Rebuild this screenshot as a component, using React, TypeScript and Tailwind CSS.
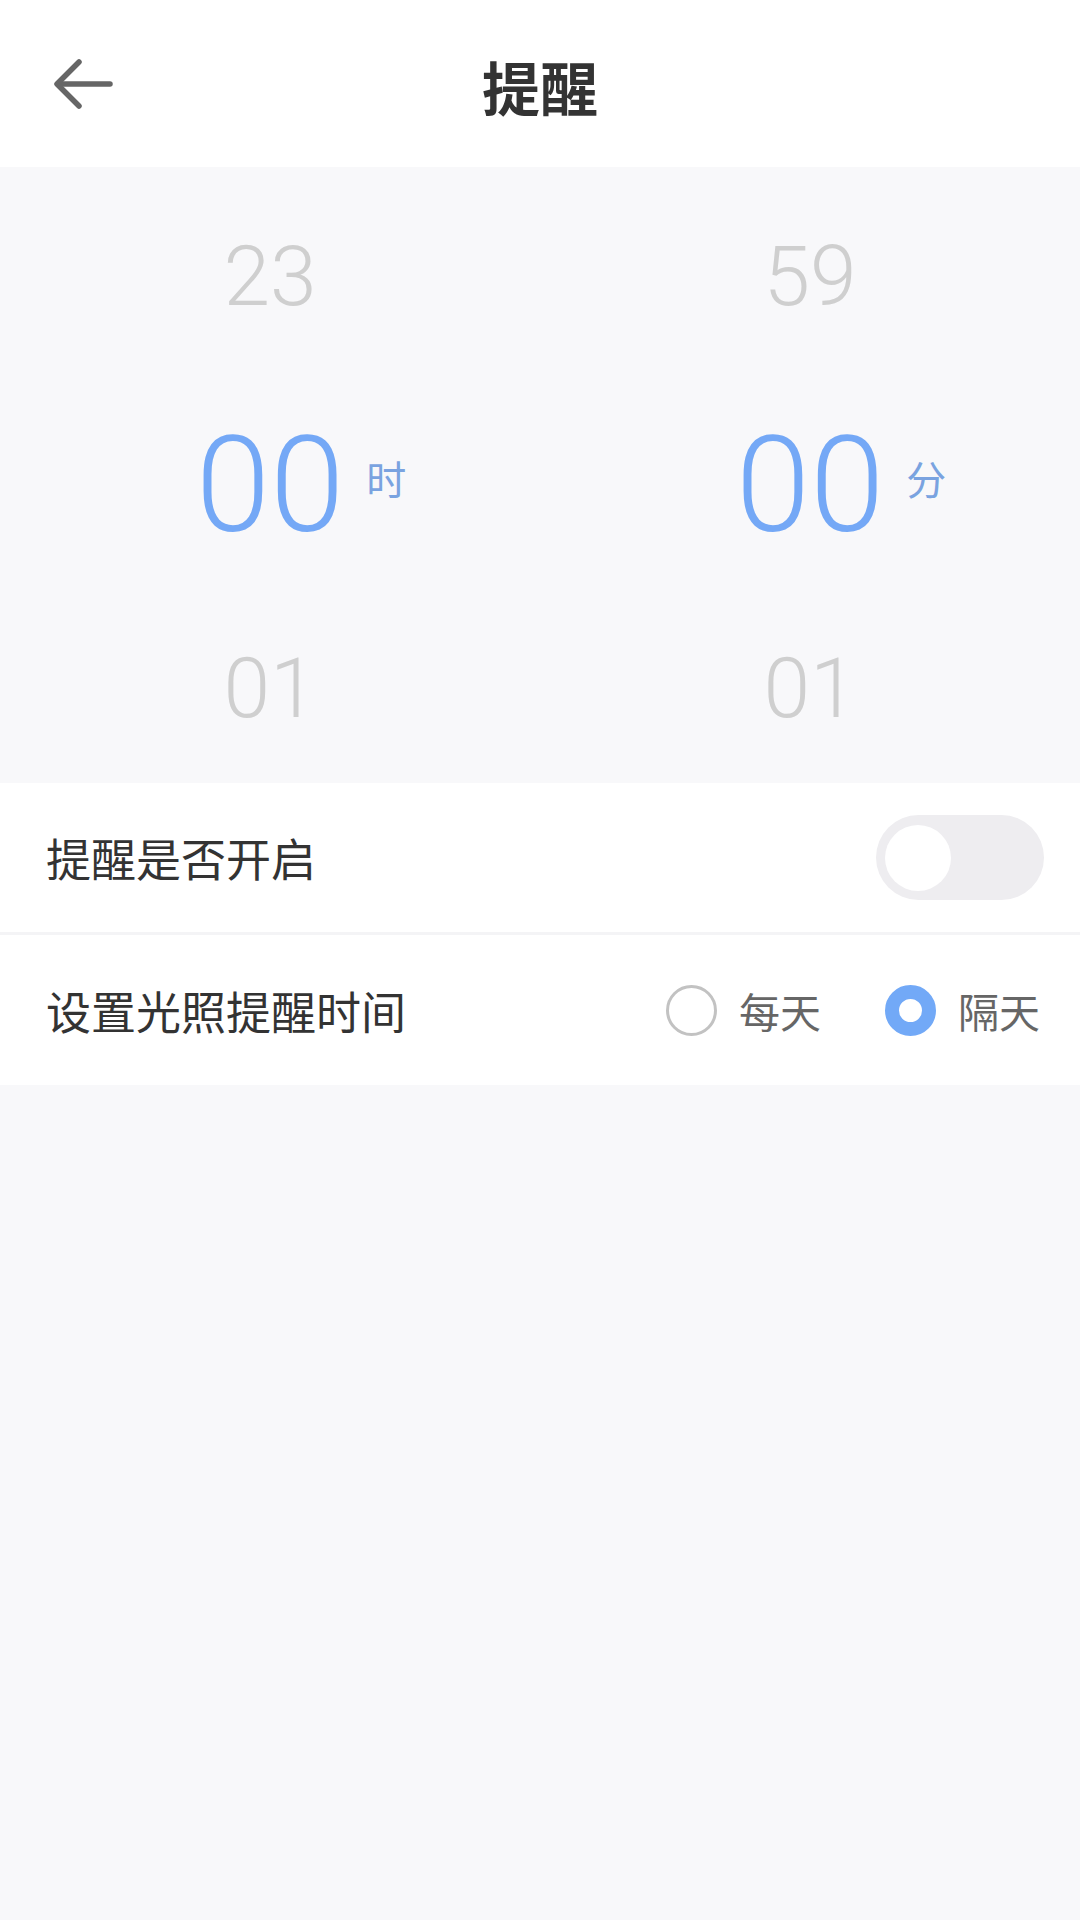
import React from "react";

const cjk = { fontFamily: '"Noto Sans CJK SC", "Noto Sans", sans-serif' };
const num = { fontFamily: 'Roboto, "Noto Sans", sans-serif' };

function Column({ top, mid, bottom, unit }: { top: string; mid: string; bottom: string; unit: string }) {
  return (
    <div className="flex flex-1 flex-col pt-[6px]">
      <div className="flex h-[212px] shrink-0 items-start justify-center pt-[46px]">
        <span style={num} className="text-[84px] font-light leading-[115px] text-[#cfcfcf]">{top}</span>
      </div>
      <div className="flex h-[201px] shrink-0 items-center justify-center">
        <span style={num} className="relative text-[134px] font-light leading-none text-[#74a8f6]">
          {mid}
          <span
            style={cjk}
            className="absolute left-full top-1/2 ml-[22px] -translate-y-[70%] whitespace-nowrap text-[40px] font-normal leading-none text-[#7aa3e0]"
          >
            {unit}
          </span>
        </span>
      </div>
      <div className="flex h-[201px] shrink-0 items-center justify-center pt-[4px]">
        <span style={num} className="text-[84px] font-light leading-none text-[#cfcfcf]">{bottom}</span>
      </div>
    </div>
  );
}

export default function App() {
  return (
    <div className="flex min-h-[1920px] w-[1080px] flex-col bg-[#f8f8fa]" style={cjk}>
      {/* Header */}
      <div className="relative flex h-[167px] shrink-0 items-center justify-center bg-white">
        <button className="absolute left-[52px] top-[58px] flex h-[52px] w-[62px] items-center justify-center">
          <svg width="62" height="52" viewBox="0 0 62 52" fill="none">
            <path d="M58 26H6" stroke="#666666" strokeWidth="5.5" strokeLinecap="round" />
            <path d="M27 4L5 26L27 48" stroke="#666666" strokeWidth="5.5" strokeLinecap="round" strokeLinejoin="round" />
          </svg>
        </button>
        <h1 className="mt-[4px] text-[58px] font-bold leading-none text-[#333333]">提醒</h1>
      </div>

      {/* Picker */}
      <div className="flex h-[616px] shrink-0 overflow-hidden bg-[#f8f8fa]">
        <Column top="23" mid="00" bottom="01" unit="时" />
        <Column top="59" mid="00" bottom="01" unit="分" />
      </div>

      {/* Row 1 */}
      <div className="flex h-[149px] shrink-0 items-center justify-between bg-white pl-[46px] pr-[36px]">
        <span className="text-[45px] leading-none text-[#333333]">提醒是否开启</span>
        <div className="flex h-[85px] w-[168px] items-center rounded-full bg-[#eeedf0] px-[9px]">
          <div className="h-[66px] w-[66px] rounded-full bg-white" />
        </div>
      </div>
      <div className="h-[3px] shrink-0 bg-[#f4f4f6]" />

      {/* Row 2 */}
      <div className="flex h-[150px] shrink-0 items-center justify-between bg-white pl-[46px] pr-[40px]">
        <span className="text-[45px] leading-none text-[#333333]">设置光照提醒时间</span>
        <div className="flex items-center">
          <div className="flex items-center gap-[22px]">
            <div className="h-[51px] w-[51px] rounded-full border-[3px] border-[#c2c2c2] bg-white" />
            <span className="text-[41px] leading-none text-[#666666]">每天</span>
          </div>
          <div className="ml-[64px] flex items-center gap-[22px]">
            <div className="h-[51px] w-[51px] rounded-full border-[14px] border-[#72a9f7] bg-white" />
            <span className="text-[41px] leading-none text-[#666666]">隔天</span>
          </div>
        </div>
      </div>

      <div className="flex-1 bg-[#f8f8fa]" />
    </div>
  );
}
